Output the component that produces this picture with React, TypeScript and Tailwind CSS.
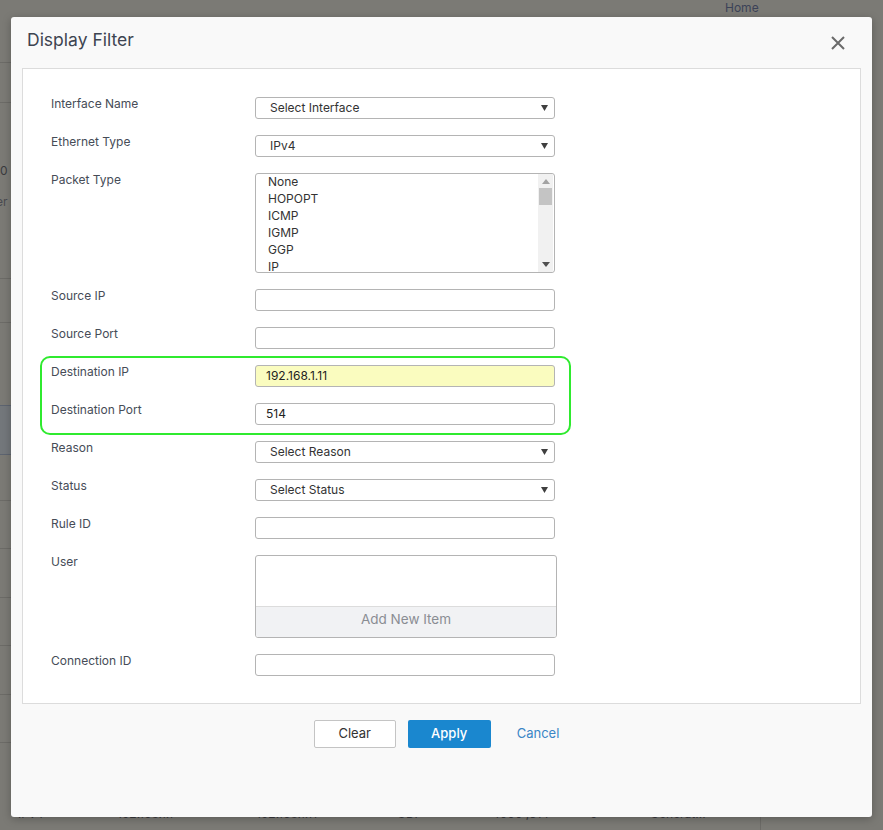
import React from 'react'

const font = { fontFamily: 'Inter, "Noto Sans", "Liberation Sans", sans-serif' }

function Arrow() {
  return (
    <svg width="7" height="6" viewBox="0 0 7 6" className="shrink-0">
      <path d="M0 0 H7 L3.5 6 Z" fill="#3f3f3f" />
    </svg>
  )
}

function SelectBox({ value }: { value: string }) {
  return (
    <div className="w-[300px] h-[22px] border border-[#b4b4b4] rounded-[3px] bg-white flex items-center justify-between pl-[14px] pr-[6px] text-[12px] text-[#333]">
      <span>{value}</span>
      <Arrow />
    </div>
  )
}

function TextBox({ value, yellow }: { value?: string; yellow?: boolean }) {
  return (
    <div
      className={
        'w-[300px] h-[22px] border border-[#b4b4b4] rounded-[3px] flex items-center pl-[10px] text-[12px] text-[#222] ' +
        (yellow ? 'bg-[#fafcbf]' : 'bg-white')
      }
    >
      {value}
    </div>
  )
}

function ListBox() {
  const opts = ['None', 'HOPOPT', 'ICMP', 'IGMP', 'GGP', 'IP']
  return (
    <div className="w-[300px] h-[100px] border border-[#b4b4b4] rounded-[3px] bg-white flex overflow-hidden">
      <div className="flex-1 -mt-[1px] pl-[12px] text-[12px] leading-[17px] text-[#333]">
        {opts.map(o => (
          <div key={o}>{o}</div>
        ))}
      </div>
      <div className="w-[15px] mr-[1px] bg-[#f1f1f1] flex flex-col items-center">
        <svg width="8" height="5" viewBox="0 0 8 5" className="mt-[5px]">
          <path d="M0 5 L4 0 L8 5 Z" fill="#a3a3a3" />
        </svg>
        <div className="w-[13px] h-[17px] mt-[4px] bg-[#c4c4c4]" />
        <div className="flex-1" />
        <svg width="8" height="5" viewBox="0 0 8 5" className="mb-[5px]">
          <path d="M0 0 H8 L4 5 Z" fill="#505050" />
        </svg>
      </div>
    </div>
  )
}

function Row({ label, children }: { label: string; children: React.ReactNode }) {
  return (
    <div className="flex items-start">
      <div className="w-[204px] shrink-0 -mt-[1px] text-[12px] leading-[16px] text-[#464c57]">{label}</div>
      {children}
    </div>
  )
}

export default function App() {
  return (
    <div className="relative w-[883px] h-[830px] overflow-hidden bg-[#7b7a75]" style={font}>
      {/* page behind the overlay */}
      <div className="absolute left-[725px] top-[0px] text-[12px] leading-[16px] text-[#3b4258]">Home</div>
      <div className="absolute left-0 top-[62px] w-[11px] h-px bg-[#6c6b67]" />
      <div className="absolute left-0 top-[102px] w-[11px] h-px bg-[#6c6b67]" />
      <div className="absolute left-0 top-[162px] text-[12px] text-[#3a3a3e]">0 I</div>
      <div className="absolute left-0 top-[193px] w-[11px] overflow-hidden text-[12px] text-[#4a4a50]">
        <span className="-ml-[4px]">er</span>
      </div>
      <div className="absolute left-0 top-[278px] w-[11px] h-px bg-[#6c6b67]" />
      <div className="absolute left-0 top-[322px] w-[11px] h-px bg-[#6c6b67]" />
      <div className="absolute left-0 top-[405px] w-[11px] h-[50px] bg-[#73777b] border-y border-[#5d6470]" />
      <div className="absolute left-0 top-[500px] w-[11px] h-px bg-[#6c6b67]" />
      <div className="absolute left-0 top-[548px] w-[11px] h-px bg-[#6c6b67]" />
      <div className="absolute left-0 top-[597px] w-[11px] h-px bg-[#6c6b67]" />
      <div className="absolute left-0 top-[645px] w-[11px] h-px bg-[#6c6b67]" />
      <div className="absolute left-0 top-[694px] w-[11px] h-px bg-[#6c6b67]" />
      <div className="absolute left-0 top-[742px] w-[11px] h-px bg-[#6c6b67]" />
      <div className="absolute left-[760px] top-[780px] w-px h-[50px] bg-[#6c6b67]" />
      <div className="absolute left-0 top-[806px] w-[883px] flex text-[12px] leading-[16px] text-[#38383c]">
        <span className="ml-[18px] w-[99px]">IPv4</span>
        <span className="w-[139px]">192.168.1.1</span>
        <span className="w-[141px]">192.168.1.11</span>
        <span className="w-[95px]">UDP</span>
        <span className="w-[98px]">4000 ,514</span>
        <span className="w-[60px]">0</span>
        <span>Generat...</span>
      </div>

      {/* modal */}
      <div className="absolute left-[11px] top-[17px] w-[861px] h-[800px] bg-[#f9f9f9] rounded-[3px] shadow-[0_2px_8px_rgba(0,0,0,0.25)] flex flex-col">
        <div className="h-[51px] shrink-0 flex items-start justify-between pl-[16px] pr-[27px]">
          <h1 className="mt-[11px] text-[17.5px] leading-[24px] text-[#3d4451]">Display Filter</h1>
          <svg width="14" height="14" viewBox="0 0 14 14" className="mt-[19px]">
            <path d="M1 1 L13 13 M13 1 L1 13" stroke="#6a6a6a" strokeWidth="2" />
          </svg>
        </div>

        <div className="relative mx-[11px] h-[636px] bg-white border border-[#dcdcdc] pl-[28px] pt-[28px] flex flex-col gap-[16px]">
          <Row label="Interface Name">
            <SelectBox value="Select Interface" />
          </Row>
          <Row label="Ethernet Type">
            <SelectBox value="IPv4" />
          </Row>
          <Row label="Packet Type">
            <ListBox />
          </Row>
          <Row label="Source IP">
            <TextBox />
          </Row>
          <Row label="Source Port">
            <TextBox />
          </Row>
          <Row label="Destination IP">
            <TextBox value="192.168.1.11" yellow />
          </Row>
          <Row label="Destination Port">
            <TextBox value="514" />
          </Row>
          <Row label="Reason">
            <SelectBox value="Select Reason" />
          </Row>
          <Row label="Status">
            <SelectBox value="Select Status" />
          </Row>
          <Row label="Rule ID">
            <TextBox />
          </Row>
          <Row label="User">
            <div className="w-[302px] h-[83px] border border-[#b4b4b4] rounded-[3px] bg-white flex flex-col overflow-hidden">
              <div className="flex-1" />
              <div className="h-[31px] pb-[5px] bg-[#f1f2f4] border-t border-[#dcdcdc] flex items-center justify-center text-[13.5px] text-[#8a8d93]">
                Add New Item
              </div>
            </div>
          </Row>
          <Row label="Connection ID">
            <TextBox />
          </Row>

          {/* highlight */}
          <div className="absolute left-[17px] top-[287px] w-[531px] h-[79px] border-2 border-[#2fea2f] rounded-[10px] pointer-events-none" />
        </div>

        <div className="flex justify-center items-start mt-[16px] gap-[12px] pl-[4px]">
          <button className="w-[82px] h-[28px] bg-white border border-[#c4c4c4] rounded-[2px] text-[13px] text-[#333]">
            Clear
          </button>
          <button className="w-[83px] h-[28px] bg-[#1a87cf] rounded-[2px] text-[13px] font-medium text-white">
            Apply
          </button>
          <button className="h-[28px] pl-[14px] pr-[14px] text-[13px] text-[#3a86c6]">Cancel</button>
        </div>
      </div>
    </div>
  )
}
